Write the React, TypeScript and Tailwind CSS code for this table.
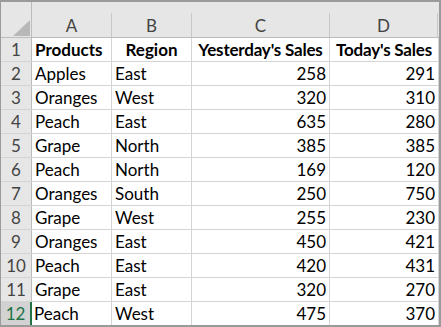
import React from "react";

const rows: [string, string, number, number][] = [
  ["Apples", "East", 258, 291],
  ["Oranges", "West", 320, 310],
  ["Peach", "East", 635, 280],
  ["Grape", "North", 385, 385],
  ["Peach", "North", 169, 120],
  ["Oranges", "South", 250, 750],
  ["Grape", "West", 255, 230],
  ["Oranges", "East", 450, 421],
  ["Peach", "East", 420, 431],
  ["Grape", "East", 320, 270],
  ["Peach", "West", 475, 370],
];

const cols = [
  { key: "A", w: "w-[80px]" },
  { key: "B", w: "w-[80px]" },
  { key: "C", w: "w-[138px]" },
  { key: "D", w: "flex-1" },
];

export default function App() {
  return (
    <div className="w-[441px] h-[327px] bg-white border-t-2 border-r-2 border-b-2 border-l border-[#9a9a9a] font-['Lato','Liberation_Sans',sans-serif] text-[17px] leading-none text-black overflow-hidden flex flex-col">
      {/* column headers */}
      <div className="h-[36px] bg-[#e6e6e6] border-b border-[#bcbcbc] flex">
        <div className="w-[31px] border-r border-[#bcbcbc] relative">
          <div className="absolute left-[12px] top-[18px] w-0 h-0 border-l-[17px] border-l-transparent border-b-[16px] border-b-[#b8b8b8]" />
        </div>
        {cols.map((c) => (
          <div key={c.key} className={`${c.w} flex flex-col`}>
            <div className="h-[11px]" />
            <div className="flex-1 flex items-center justify-center text-[#444] border-r border-[#c8c8c8]">
              {c.key}
            </div>
          </div>
        ))}
        <div className="w-[1px]" />
      </div>

      {/* row 1 */}
      <div className="h-[24px] flex border-b border-[#d4d4d4]">
        <div className="w-[31px] bg-[#e6e6e6] border-r border-[#bcbcbc] flex items-center justify-center text-[#444]">1</div>
        <div className="w-[80px] border-r border-[#d4d4d4] px-[3px] flex items-center font-bold">Products</div>
        <div className="w-[80px] border-r border-[#d4d4d4] flex items-center justify-center font-bold">Region</div>
        <div className="w-[138px] border-r border-[#d4d4d4] flex items-center justify-center font-bold whitespace-nowrap tracking-[-0.2px]">Yesterday's Sales</div>
        <div className="flex-1 border-r border-[#d4d4d4] flex items-center justify-center font-bold whitespace-nowrap tracking-[-0.2px]">Today's Sales</div>
      </div>

      {rows.map((r, i) => {
        const n = i + 2;
        const last = n === 12;
        return (
          <div key={n} className={`flex ${last ? "h-[23px]" : "h-[24px] border-b border-[#d4d4d4]"}`}>
            <div
              className={`w-[31px] flex items-center justify-center ${
                last ? "bg-[#d2d2d2] text-[#217346] border-r-2 border-[#217346]" : "bg-[#e6e6e6] text-[#444] border-r border-[#bcbcbc]"
              }`}
            >
              {n}
            </div>
            <div className={`w-[80px] border-r border-[#d4d4d4] flex items-center ${last ? "pl-[2px]" : "px-[3px]"}`}>{r[0]}</div>
            <div className="w-[80px] border-r border-[#d4d4d4] px-[3px] flex items-center">{r[1]}</div>
            <div className="w-[138px] border-r border-[#d4d4d4] px-[3px] flex items-center justify-end">{r[2]}</div>
            <div className="flex-1 border-r border-[#d4d4d4] px-[3px] flex items-center justify-end">{r[3]}</div>
          </div>
        );
      })}
    </div>
  );
}
